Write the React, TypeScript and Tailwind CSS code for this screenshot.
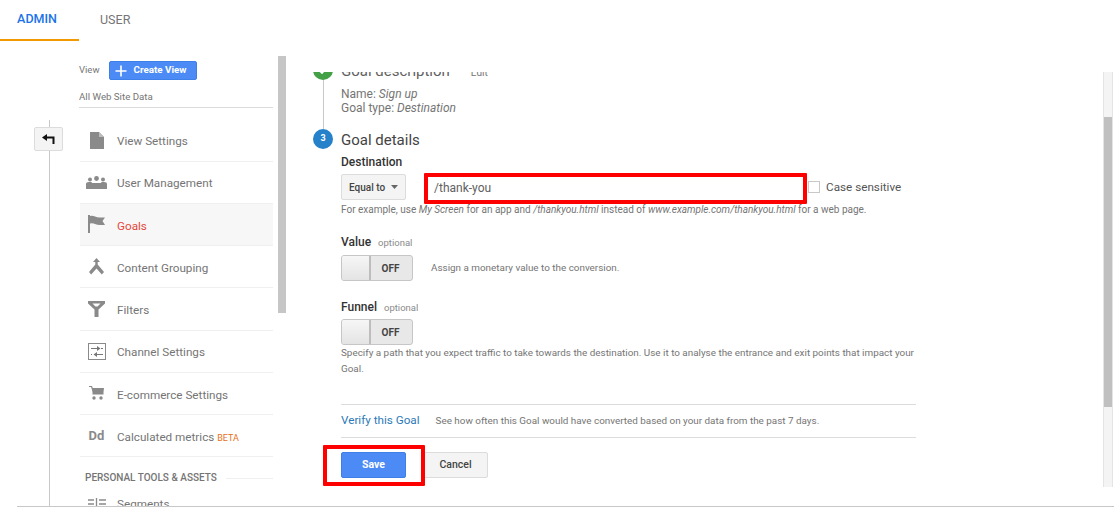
import React from "react";

const Row = ({ icon, children, active }: { icon: React.ReactNode; children: React.ReactNode; active?: boolean }) => (
  <div className={`flex h-[42.25px] shrink-0 items-center border-b border-[#efefef] ${active ? "bg-[#f7f7f7]" : ""}`}>
    <div className="flex w-[37px] shrink-0 justify-center pr-[4px]">{icon}</div>
    <div className={`mt-[4px] text-[11.7px] ${active ? "text-[#e5483b]" : "text-[#757575]"}`}>{children}</div>
  </div>
);

const Toggle = () => (
  <div className="flex h-[26px] w-[72px] overflow-hidden rounded-[3px] border border-[#c6c6c6] bg-[#e8e8e8]">
    <div className="h-full w-[29px] border-r-2 border-[#bdbdbd] bg-gradient-to-b from-[#f6f6f6] to-[#e4e4e4]" />
    <div className="flex flex-1 items-center justify-center pr-[2px] text-[10px] font-bold text-[#444]">OFF</div>
  </div>
);

const G = "#8a8a8a";

export default function App() {
  return (
    <div className="relative h-[519px] w-[1114px] overflow-hidden bg-white font-['Roboto',sans-serif]">
      <div className="flex h-[41px]">
        <div className="flex h-[41px] w-[79px] items-center justify-center border-b-[2px] border-[#f29900] pr-[5px] text-[12.5px] font-medium text-[#1a73e8]">ADMIN</div>
        <div className="ml-[21px] flex items-center text-[12.5px] text-[#757575]">USER</div>
      </div>

      <div className="mt-[15px] ml-[17px] flex h-[451px] border-b border-[#c8c8c8]">
        {/* back column */}
        <div className="relative w-[62px] shrink-0">
          <div className="ml-[32px] mt-[64px] h-[386px] w-px bg-[#c8c8c8]" />
          <div className="absolute left-[17px] top-[71px] flex h-[24px] w-[29px] items-center justify-center rounded-[2px] border border-[#dcdcdc] bg-[#f4f4f4]">
            <svg width="13" height="11" viewBox="0 0 13 11">
              <path d="M0 3.500 5 0V7z" fill="#111" />
              <path d="M4 3.500H11.500V10" fill="none" stroke="#111" strokeWidth="2" />
            </svg>
          </div>
        </div>

        {/* nav */}
        <div className="w-[194px] shrink-0 overflow-hidden">
          <div className="mt-[5px] flex h-[19px] items-center">
            <span className="text-[9.5px] text-[#757575]">View</span>
            <div className="ml-[9px] flex h-[19px] w-[88px] items-center rounded-[2px] border border-[#3f7fe8] bg-[#4c8bf5] pl-[5px] text-[9.8px] font-bold text-white">
              <svg width="12" height="12" viewBox="0 0 12 12"><path d="M6 0.5v11M0.5 6h11" stroke="#fff" strokeWidth="1.6" /></svg>
              <span className="ml-[7px]">Create View</span>
            </div>
          </div>
          <div className="mt-[8px] flex h-[20px] items-center border-b border-[#dcdcdc] pb-[1px] text-[9.7px] text-[#757575]">All Web Site Data</div>
          <div className="ml-[1px] mt-[12px] flex flex-col">
            <div className="flex h-[41.5px] shrink-0 items-center border-b border-[#efefef]">
              <div className="flex w-[37px] shrink-0 justify-center pr-[4px]">
                <svg width="14" height="17" viewBox="0 0 14 17"><path d="M0 0h9l5 5v12H0z" fill={G} /><path d="M9 0v5h5" fill="#bdbdbd" /></svg>
              </div>
              <div className="mt-[4px] text-[11.7px] text-[#757575]">View Settings</div>
            </div>
            <Row icon={<svg width="21" height="13" viewBox="0 0 21 13"><g fill={G}><circle cx="4" cy="3.5" r="2" /><circle cx="10.5" cy="2.5" r="2.4" /><circle cx="17" cy="3.5" r="2" /><path d="M0 13V8q0-2 3-2h2q1 0 1 1h9q0-1 1-1h2q3 0 3 2v5z" /></g></svg>}>User Management</Row>
            <Row active icon={<svg width="17" height="18" viewBox="0 0 17 18"><path d="M0 0h2v18H0zM2 1q3-.5 5 .5t5 1h5l-2.500 3.500L17 10h-5q-3 0-5-1t-5-.5z" fill={G} /></svg>}>Goals</Row>
            <Row icon={<svg width="15" height="17" viewBox="0 0 15 17"><path d="M7.500 0 11 4H8.700v2.500L15 14l-2.200 2.500L7.500 10.500 2.200 16.500 0 14l6.300-7.500V4H4z" fill={G} /></svg>}>Content Grouping</Row>
            <Row icon={<svg width="17" height="16" viewBox="0 0 17 16"><path d="M0 0h17v2.500l-6.500 6V16h-4V8.500L0 2.500zM4.500 2.500l3 3h2l3-3z" fill={G} fillRule="evenodd" /></svg>}>Filters</Row>
            <Row icon={<svg width="18" height="17" viewBox="0 0 18 17"><rect x=".5" y=".5" width="17" height="16" fill="none" stroke={G} /><path d="M3 5.500h8M15 5.500h-2M15 11.500H7M3 11.500h1" fill="none" stroke="#777" strokeWidth="1" /><path d="M9 3l3.500 2.500L9 8zM9 9l-3.500 2.500L9 14z" fill="#777" /></svg>}>Channel Settings</Row>
            <Row icon={<svg width="15" height="14" viewBox="0 0 15 14"><path d="M0 0h3l.7 2H15l-1.500 6H4.500L2 1H0z" fill={G} /><rect x="3.500" y="2" width="11" height="6.500" fill={G} /><circle cx="5" cy="12" r="1.700" fill={G} /><circle cx="12" cy="12" r="1.700" fill={G} /></svg>}>E-commerce Settings</Row>
            <Row icon={<span className="text-[13px] font-bold text-[#8a8a8a]">Dd</span>}>
              Calculated metrics <span className="text-[9px] text-[#e8701a]">BETA</span>
            </Row>
            <div className="ml-[5px] mt-[15px] flex items-center text-[10px] font-medium leading-[12px] text-[#757575]">
              <span>PERSONAL TOOLS &amp; ASSETS</span>
              <div className="ml-[9px] h-px flex-1 bg-[#efefef]" />
            </div>
            <div className="mt-[12px] flex items-center">
              <div className="flex w-[37px] shrink-0 justify-center pr-[4px]">
                <svg width="18" height="14" viewBox="0 0 18 14"><path d="M0 2h6M0 6h6M0 10h6M8.500 0v14M11 2h7M11 6h7M11 10h7" stroke={G} strokeWidth="1.300" /></svg>
              </div>
              <div className="text-[11.7px] text-[#757575]">Segments</div>
            </div>
          </div>
        </div>

        {/* nav scrollbar */}
        <div className="ml-[5px] w-[8px] shrink-0">
          <div className="h-[257px] bg-[#c6c6c6]" />
        </div>

        {/* content */}
        <div className="mt-[16px] flex h-[415px] flex-1">
          <div className="flex-1 overflow-hidden pl-[27px]">
            <div className="-mt-[12px] w-[603px]">
              <div className="flex h-[69px]">
                <div className="flex w-[20px] flex-col items-center">
                  <div className="flex h-5 w-5 shrink-0 items-center justify-center rounded-full bg-[#43a047]">
                    <svg width="10" height="8" viewBox="0 0 10 8"><path d="M1 4l3 3 5-6" fill="none" stroke="#fff" strokeWidth="1.800" /></svg>
                  </div>
                  <div className="w-px flex-1 bg-[#c8c8c8]" />
                </div>
                <div className="ml-[8px]">
                  <div className="mt-[1px] flex h-[20px] items-center text-[15px] leading-none text-[#616161]">
                    Goal description<span className="ml-[21px] mt-[4px] text-[10px] text-[#757575]">Edit</span>
                  </div>
                  <div className="mt-[6px] text-[12px] leading-[14px] text-[#757575]">
                    <div>Name: <i>Sign up</i></div>
                    <div>Goal type: <i>Destination</i></div>
                  </div>
                </div>
              </div>
              <div className="flex h-5 items-center">
                <div className="flex h-5 w-5 items-center justify-center rounded-full bg-[#2581c9] text-[9px] font-bold text-white">3</div>
                <div className="ml-[8px] mt-[3px] text-[15px] text-[#444]">Goal details</div>
              </div>
              <div className="ml-[28px]">
                <div className="mt-[6px] text-[12px] font-medium leading-[14px] text-[#333]">Destination</div>
                <div className="mt-[5px] flex h-[26px] items-center">
                  <div className="flex h-[26px] w-[65px] items-center rounded-[2px] border border-[#dcdcdc] bg-[#f4f4f4] pl-[7px] text-[10px] font-medium text-[#444]">
                    Equal to
                    <svg className="ml-[6px]" width="7" height="4" viewBox="0 0 7 4"><path d="M0 0h7L3.500 4z" fill="#666" /></svg>
                  </div>
                  <div className="ml-[28px] mt-[2px] text-[12px] text-[#616161]">/thank-you</div>
                  <div className="ml-[317px] h-[12px] w-[12px] border border-[#c8c8c8]" />
                  <div className="ml-[6px] mt-[2px] text-[11.7px] text-[#555]">Case sensitive</div>
                </div>
                <div className="mt-[3px] text-[10px] leading-[14px] text-[#757575]">
                  For example, use <i>My Screen</i> for an app and <i>/thankyou.html</i> instead of <i>www.example.com/thankyou.html</i> for a web page.
                </div>
                <div className="mt-[18px] flex items-baseline text-[12px] font-medium leading-[14px] text-[#333]">
                  Value<span className="ml-[7px] text-[9.5px] font-normal text-[#8a8a8a]">optional</span>
                </div>
                <div className="mt-[5px] flex items-center">
                  <Toggle />
                  <div className="ml-[18px] text-[9.9px] text-[#757575]">Assign a monetary value to the conversion.</div>
                </div>
                <div className="mt-[19px] flex items-baseline text-[12px] font-medium leading-[14px] text-[#333]">
                  Funnel<span className="ml-[7px] text-[9.5px] font-normal text-[#8a8a8a]">optional</span>
                </div>
                <div className="mt-[4px]"><Toggle /></div>
                <div className="w-[575px] text-[9.9px] leading-[16px] text-[#757575]">
                  Specify a path that you expect traffic to take towards the destination. Use it to analyse the entrance and exit points that impact your Goal.
                </div>
                <div className="mt-[27px] flex h-[34px] w-[575px] items-center border-y border-[#dcdcdc]">
                  <span className="text-[11.7px] text-[#2d7ab8]">Verify this Goal</span>
                  <span className="ml-[16px] text-[9.9px] text-[#757575]">See how often this Goal would have converted based on your data from the past 7 days.</span>
                </div>
                <div className="mt-[14px] flex">
                  <div className="flex h-[26px] w-[65px] items-center justify-center rounded-[2px] border border-[#3f7fe8] bg-[#4c8bf5] text-[10.5px] font-bold text-white">Save</div>
                  <div className="ml-[17px] flex h-[26px] w-[65px] items-center justify-center rounded-[2px] border border-[#dcdcdc] bg-[#f4f4f4] text-[10.5px] font-medium text-[#444]">Cancel</div>
                </div>
              </div>
            </div>
          </div>
          <div className="mr-px w-[10px] shrink-0 border-x border-[#e4e4e4] bg-[#f4f4f4]">
            <div className="mt-[45px] h-[290px] bg-[#c0c0c0]" />
          </div>
        </div>
      </div>

      {/* annotation boxes */}
      <div className="absolute left-[424px] top-[173px] h-[31px] w-[383px] rounded-[1px] border-[4px] border-[#ff0000]" />
      <div className="absolute left-[323px] top-[445px] h-[41px] w-[102px] rounded-[1px] border-[4px] border-[#ff0000]" />
    </div>
  );
}
